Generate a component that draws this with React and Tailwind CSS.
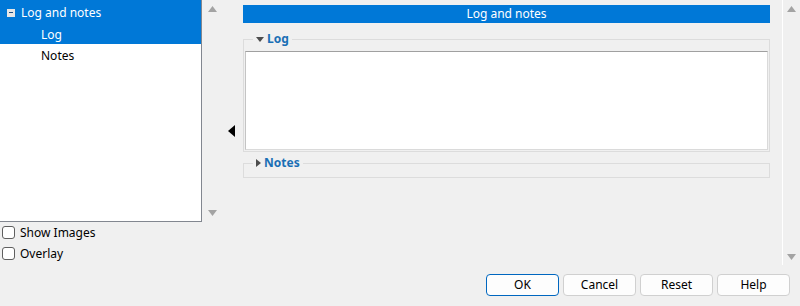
import React from 'react';

const UpArrow = ({ className = '' }) => (
  <svg width="9" height="6" viewBox="0 0 9 6" className={className}>
    <path d="M4.5 0 L9 6 L0 6 Z" fill="#a3a3a3" />
  </svg>
);

const DownArrow = ({ className = '' }) => (
  <svg width="9" height="6" viewBox="0 0 9 6" className={className}>
    <path d="M0 0 L9 0 L4.5 6 Z" fill="#a3a3a3" />
  </svg>
);

const Checkbox = ({ label }) => (
  <label className="flex items-center h-[21px] pl-[2px] gap-[5px]">
    <span className="w-[13px] h-[13px] rounded-[3px] border border-[#5f5f5f] bg-white" />
    <span>{label}</span>
  </label>
);

const Group = ({ title, open, children, className = '' }) => (
  <fieldset className={`border border-[#dcdcdc] px-[1px] pb-[1px] ${className}`}>
    <legend className="ml-[8px] px-[3px] h-[16px] flex items-center gap-[3px] font-bold text-[#1a6fb5]">
      {open ? (
        <svg width="8" height="5" viewBox="0 0 8 5"><path d="M0 0 L8 0 L4 5 Z" fill="#4d4d4d" /></svg>
      ) : (
        <svg width="5" height="8" viewBox="0 0 5 8"><path d="M0 0 L5 4 L0 8 Z" fill="#4d4d4d" /></svg>
      )}
      <span className="leading-[16px]">{title}</span>
    </legend>
    {children}
  </fieldset>
);

export default function App() {
  return (
    <div
      className="w-[800px] h-[306px] bg-[#f0f0f0] flex flex-col text-[12px] text-black overflow-hidden"
      style={{ fontFamily: '"Noto Sans", "Open Sans", sans-serif' }}
    >
      <div className="flex h-[266px]">
        {/* left tree column */}
        <div className="w-[202px] flex flex-col">
          <div className="h-[222px] border border-[#828790] border-l-0 border-t-0 bg-white">
            <div className="h-[23px] bg-[#0078d7] text-white flex items-center pl-[7px] pt-[2px]">
              <span className="w-[8px] h-[8px] bg-[#e6e6e6] flex items-center justify-center">
                <span className="w-[4px] h-[1px] bg-[#1f4f80]" />
              </span>
              <span className="ml-[6px]">Log and notes</span>
            </div>
            <div className="h-[21px] bg-[#0078d7] text-white flex items-center pl-[41px] pt-[2px]">Log</div>
            <div className="h-[22px] flex items-center pl-[41px] pt-[2px]">Notes</div>
          </div>
          <Checkbox label="Show Images" />
          <Checkbox label="Overlay" />
        </div>

        {/* tree scrollbar */}
        <div className="w-[20px] h-[222px] flex flex-col items-center justify-between pt-[6px] pb-[6px]">
          <UpArrow />
          <DownArrow />
        </div>

        {/* collapse arrow */}
        <div className="w-[21px] flex items-start justify-center pt-[125px] pr-[3px]">
          <svg width="7" height="12" viewBox="0 0 7 12"><path d="M7 0 L7 12 L0 6 Z" fill="#000" /></svg>
        </div>

        {/* right panel */}
        <div className="w-[527px] pt-[5px] flex flex-col">
          <div className="h-[18px] bg-[#0078d7] text-white flex items-center justify-center">Log and notes</div>
          <Group title="Log" open className="mt-[8px]">
            <div className="mt-[4px] h-[99px] bg-white border border-[#dadada] border-t-[#a0a0a0] border-l-[#c4c4c4]" />
          </Group>
          <Group title="Notes" className="mt-[3px]">
            <div className="h-[5px]" />
          </Group>
        </div>

        {/* right scrollbar */}
        <div className="w-[12px]" />
        <div className="w-[1px] h-[265px] bg-white" />
        <div className="w-[17px] h-[265px] flex flex-col items-center justify-between pt-[6px] pb-[5px]">
          <UpArrow />
          <DownArrow />
        </div>
      </div>

      <div className="flex justify-end gap-[4px] pt-[8px] pr-[10px]">
        {['OK', 'Cancel', 'Reset', 'Help'].map((b) => (
          <button
            key={b}
            className={`w-[73px] h-[22px] rounded-[4px] bg-[#fdfdfd] border flex items-center justify-center ${
              b === 'OK' ? 'border-[#0067c0]' : 'border-[#d0d0d0]'
            }`}
          >
            {b}
          </button>
        ))}
      </div>
    </div>
  );
}
